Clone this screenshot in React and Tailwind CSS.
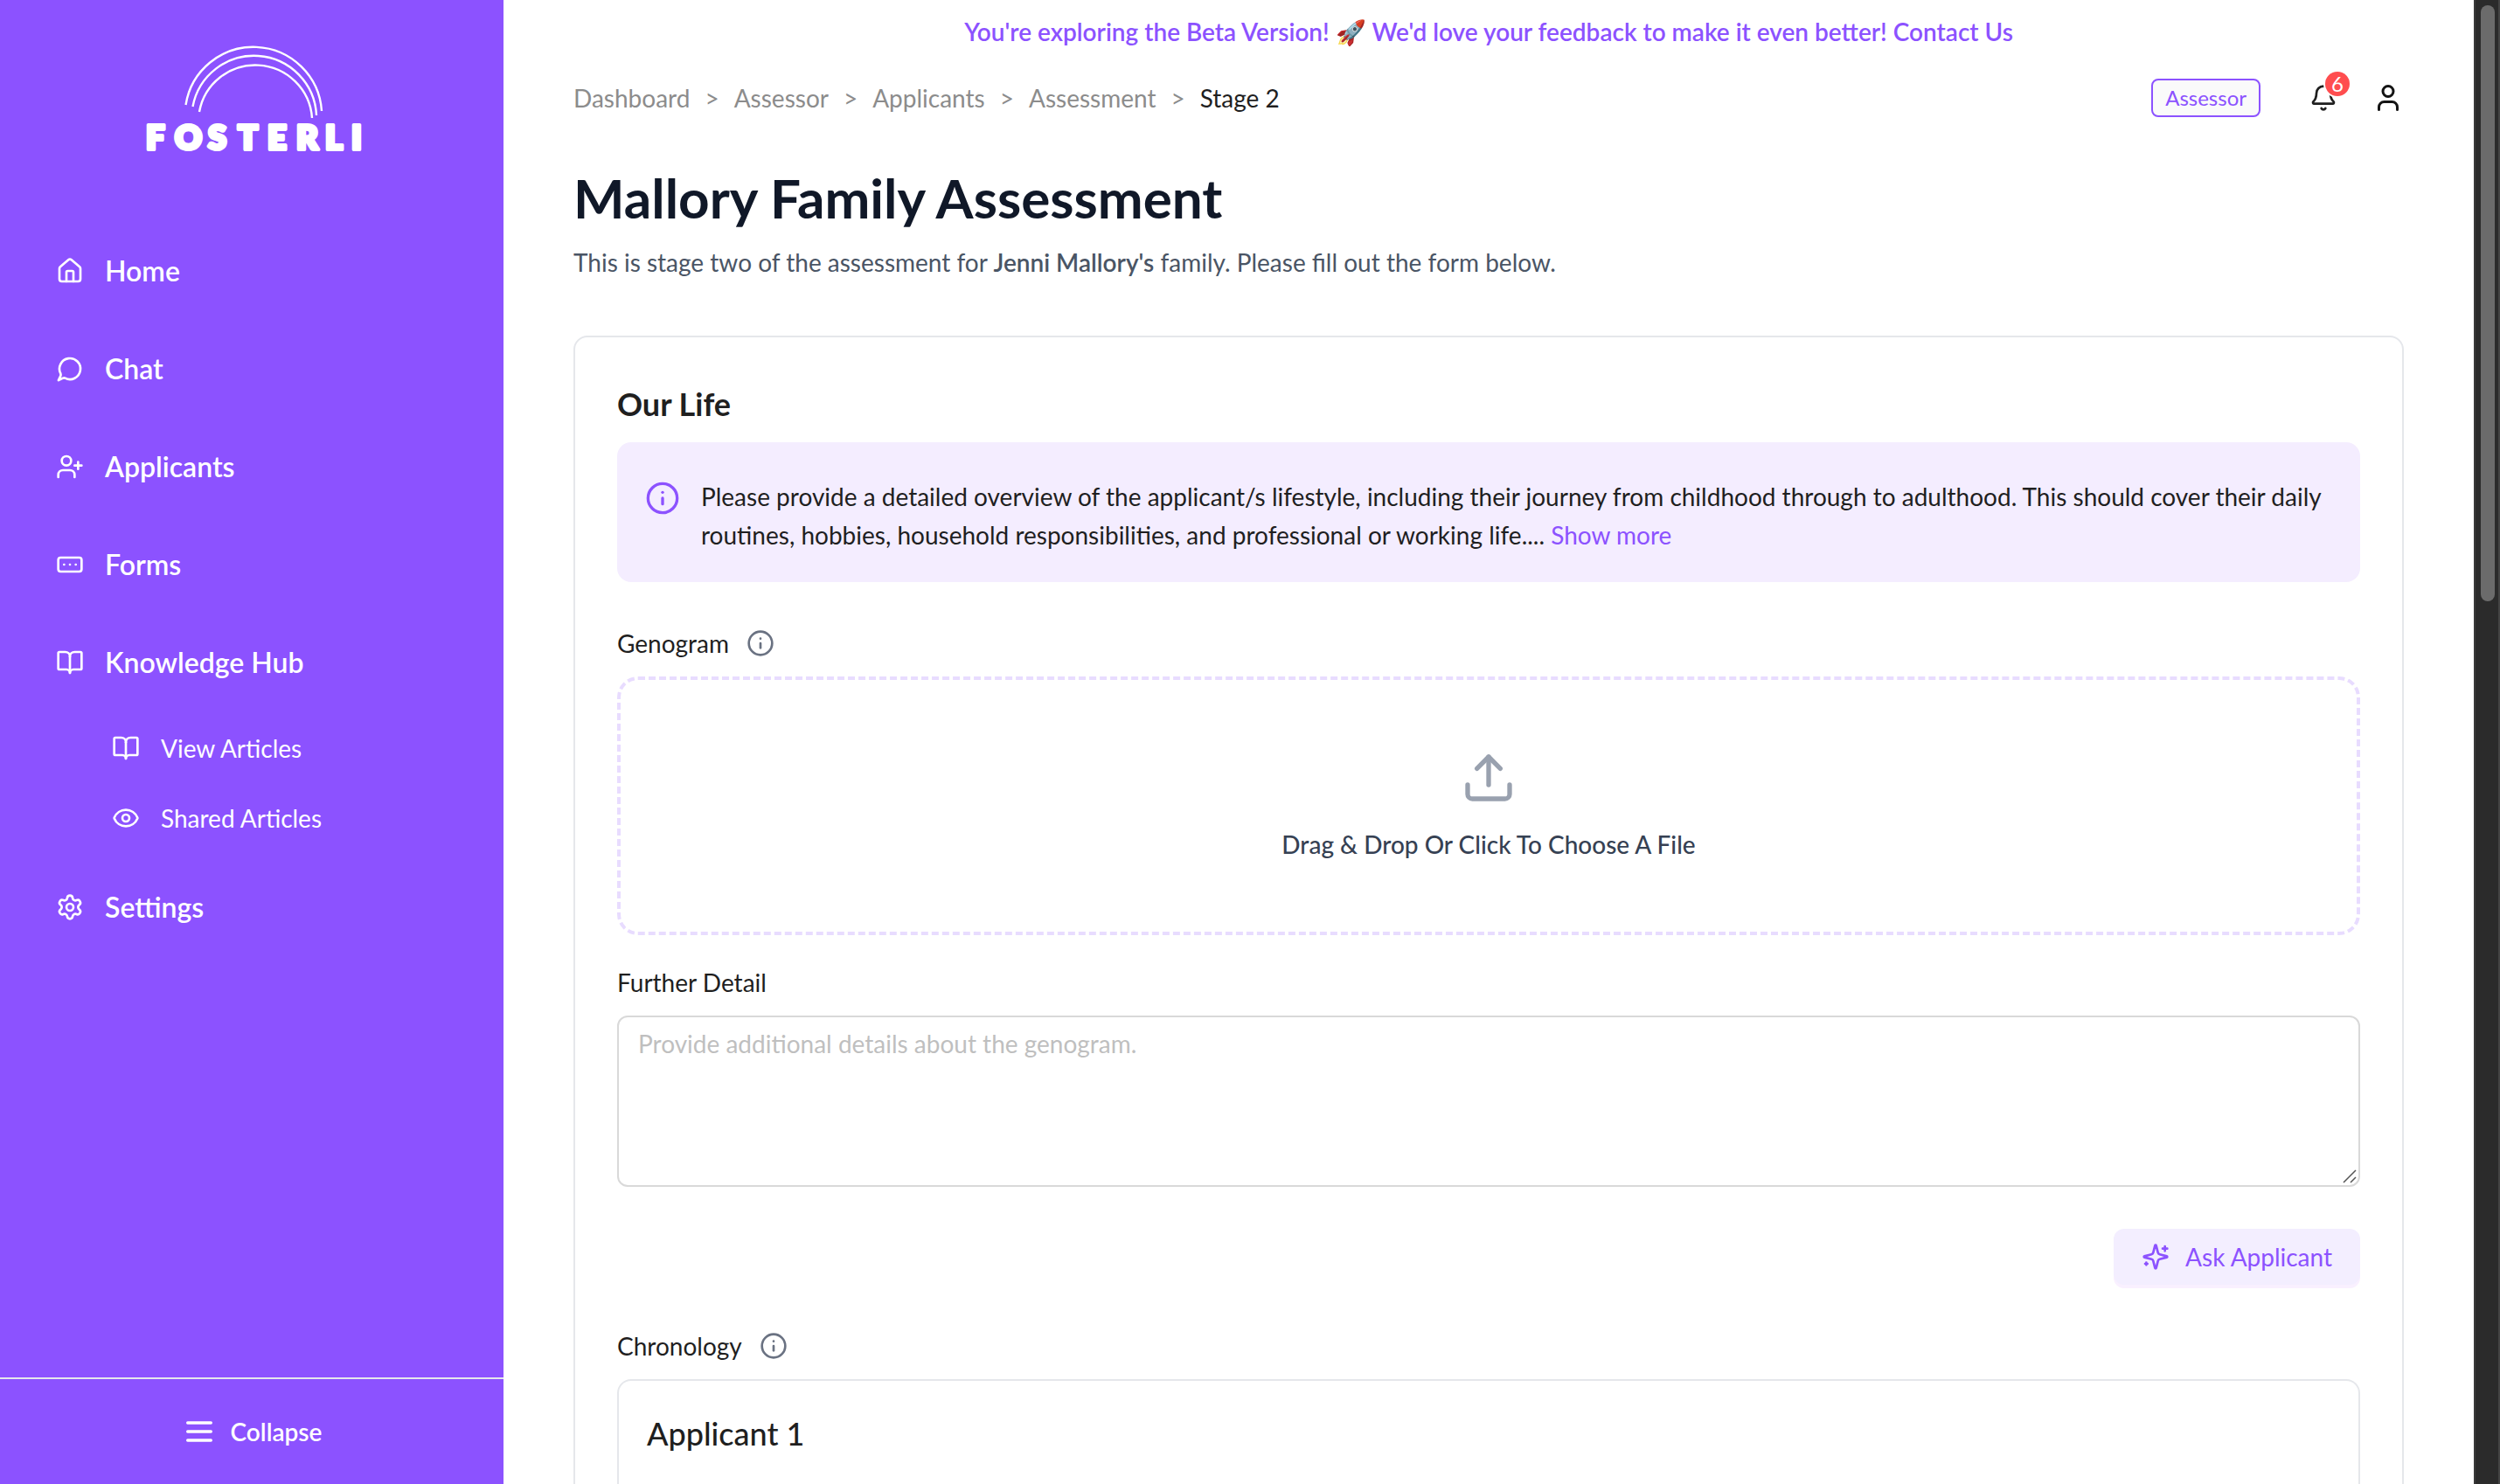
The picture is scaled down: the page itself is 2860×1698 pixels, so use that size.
import React from "react";
import {
  House,
  UserPlus,
  RectangleEllipsis,
  BookOpen,
  Eye,
  Settings,
  Bell,
  User,
  Info,
} from "lucide-react";

function Logo() {
  return (
    <svg
      viewBox="158 44 260 136"
      className="h-[136px] w-[260px] text-white"
      fill="none"
      stroke="currentColor"
      role="img"
      aria-label="Fosterli"
    >
      <g strokeWidth="2.4">
        <path d="M212.500 120A78.300 78.300 0 0 1 368 127" />
        <path d="M220.500 122A71.400 71.400 0 0 1 362 132" />
        <path d="M228 128A65.100 65.100 0 0 1 357 135" />
      </g>
      <text
        x="167 200 238 272 306 339 372 402"
        y="171"
        fill="currentColor"
        strokeWidth="4"
        strokeLinejoin="round"
        fontSize="38"
        fontWeight="800"
        fontFamily="Lato, sans-serif"
      >
        FOSTERLI
      </text>
    </svg>
  );
}

function ChatIcon({ className }) {
  return (
    <svg
      viewBox="0 0 24 24"
      className={className}
      fill="none"
      stroke="currentColor"
      strokeWidth="2"
      strokeLinecap="round"
      strokeLinejoin="round"
      aria-hidden="true"
    >
      <path d="M4 16.100A9 9 0 1 1 7.900 20C7.200 19.700 6.600 19.800 6 20L2.200 21.800L3.900 18.300C4.200 17.600 4.300 16.800 4 16.100Z" />
    </svg>
  );
}

function MenuIcon({ className }) {
  return (
    <svg
      viewBox="0 0 24 24"
      className={className}
      fill="none"
      stroke="currentColor"
      strokeWidth="2"
      strokeLinecap="round"
      aria-hidden="true"
    >
      <path d="M4 6h16M4 12h16M4 18h16" />
    </svg>
  );
}

function UploadIcon({ className }) {
  return (
    <svg
      viewBox="0 0 24 24"
      className={className}
      fill="none"
      stroke="currentColor"
      strokeWidth="2"
      strokeLinecap="round"
      strokeLinejoin="round"
      aria-hidden="true"
    >
      <path d="M21 15v4a2 2 0 0 1-2 2H5a2 2 0 0 1-2-2v-4" />
      <path d="M17 8l-5-5-5 5" />
      <path d="M12 3v12" />
    </svg>
  );
}

function SparklesIcon({ className }) {
  return (
    <svg
      viewBox="0 0 24 24"
      className={className}
      fill="none"
      stroke="currentColor"
      strokeWidth="2"
      strokeLinecap="round"
      strokeLinejoin="round"
      aria-hidden="true"
    >
      <path d="M9.937 15.500A2 2 0 0 0 8.500 14.063l-6.135-1.582a.5.5 0 0 1 0-.962L8.500 9.936A2 2 0 0 0 9.937 8.500l1.582-6.135a.5.5 0 0 1 .963 0L14.063 8.500A2 2 0 0 0 15.500 9.937l6.135 1.581a.5.5 0 0 1 0 .964L15.500 14.063a2 2 0 0 0-1.437 1.437l-1.582 6.135a.5.5 0 0 1-.963 0z" />
      <path d="M20 3v4M22 5h-4M4 17v2M5 18H3" />
    </svg>
  );
}

const mainNav = [
  { label: "Home", Icon: House },
  { label: "Chat", Icon: ChatIcon },
  { label: "Applicants", Icon: UserPlus },
  { label: "Forms", Icon: RectangleEllipsis },
  { label: "Knowledge Hub", Icon: BookOpen },
];

const hubNav = [
  { label: "View Articles", Icon: BookOpen },
  { label: "Shared Articles", Icon: Eye },
];

function NavLink({ label, Icon }) {
  return (
    <a href="#" className="flex h-28 items-center gap-6 px-16 text-[32px] leading-10 font-semibold">
      <Icon className="size-8 shrink-0" />
      <span>{label}</span>
    </a>
  );
}

function Sidebar() {
  return (
    <aside className="flex w-[576px] shrink-0 flex-col bg-[#8c52ff] text-white">
      <div className="flex justify-center pt-11">
        <Logo />
      </div>
      <nav className="mt-[74px] flex-1">
        {mainNav.map((item) => (
          <NavLink key={item.label} {...item} />
        ))}
        <div className="py-0.5">
          {hubNav.map(({ label, Icon }) => (
            <a key={label} href="#" className="flex h-20 items-center gap-6 pl-32 text-[28px] leading-10">
              <Icon className="size-8 shrink-0" />
              <span>{label}</span>
            </a>
          ))}
        </div>
        <div className="pt-1">
          <NavLink label="Settings" Icon={Settings} />
        </div>
      </nav>
      <button
        type="button"
        className="flex items-center justify-center gap-4 border-t-2 border-gray-200 py-10 text-[28px] leading-10 font-semibold"
      >
        <MenuIcon className="size-10" />
        Collapse
      </button>
    </aside>
  );
}

function Breadcrumb() {
  const trail = ["Dashboard", "Assessor", "Applicants", "Assessment"];
  return (
    <nav aria-label="Breadcrumb">
      <ol className="flex items-center gap-[17px] text-[28px] leading-11 text-[#8c8c8c]">
        {trail.map((name) => (
          <li key={name} className="flex gap-[17px]">
            <a href="#">{name}</a>
            <span aria-hidden="true">&gt;</span>
          </li>
        ))}
        <li aria-current="page" className="text-[#1f1f1f]">
          Stage 2
        </li>
      </ol>
    </nav>
  );
}

function Header() {
  return (
    <header className="mt-8 flex items-center justify-between">
      <Breadcrumb />
      <div className="flex items-center">
        <span className="flex h-11 items-center rounded-lg border-2 border-[#8c52ff] bg-[#fafafa] px-[14px] text-2xl text-[#8c52ff]">
          Assessor
        </span>
        <button type="button" aria-label="Notifications" className="relative ml-14 text-[#1f1f1f]">
          <Bell className="size-8" />
          <span className="absolute -top-3.5 left-[18px] flex size-7 items-center justify-center rounded-full bg-[#ff4d4f] text-2xl leading-none text-white ring-2 ring-white">
            6
          </span>
        </button>
        <button type="button" aria-label="Account" className="ml-10 text-[#141414]">
          <User className="size-9" />
        </button>
      </div>
    </header>
  );
}

function FieldLabel({ htmlFor, children, hint }) {
  return (
    <div className="flex items-center gap-5 text-[28px] leading-11 text-[#1f1f1f]">
      <label htmlFor={htmlFor}>{children}</label>
      {hint && (
        <button type="button" aria-label={hint} className="text-gray-500">
          <Info className="size-8" />
        </button>
      )}
    </div>
  );
}

function OurLife() {
  return (
    <section className="mt-[62px] rounded-2xl border-2 border-gray-200 px-12 pt-12 text-[#1f1f1f]">
      <h2 className="text-4xl leading-14 font-bold">Our Life</h2>

      <div className="mt-4 flex gap-6 rounded-2xl bg-[#f4edff] px-8 pt-10 pb-8 text-[28px] leading-11">
        <Info className="mt-1 size-10 shrink-0 text-[#8c52ff]" />
        <p>
          Please provide a detailed overview of the applicant/s lifestyle, including their journey from childhood
          through to adulthood. This should cover their daily
          <br />
          routines, hobbies, household responsibilities, and professional or working life....{" "}
          <a href="#" className="text-[#8c52ff]">
            Show more
          </a>
        </p>
      </div>

      <div className="mt-12">
        <FieldLabel htmlFor="genogram" hint="About the genogram">
          Genogram
        </FieldLabel>
        <label
          htmlFor="genogram"
          className="mt-4 flex cursor-pointer flex-col items-center gap-6 rounded-3xl border-4 border-dashed border-[#e8dcff] py-20"
        >
          <UploadIcon className="size-16 text-gray-400" />
          <span className="text-[28px] leading-10 font-medium text-gray-700">Drag &amp; Drop Or Click To Choose A File</span>
          <input id="genogram" type="file" className="sr-only" />
        </label>
      </div>

      <div className="mt-8">
        <FieldLabel htmlFor="detail">Further Detail</FieldLabel>
        <div className="relative mt-4">
          <textarea
            id="detail"
            placeholder="Provide additional details about the genogram."
            className="block h-[196px] w-full resize-none rounded-xl border-2 border-[#d9d9d9] px-[22px] py-2 text-[28px] leading-11 placeholder:text-[#bfbfbf]"
          />
          <svg
            viewBox="0 0 16 16"
            className="pointer-events-none absolute right-1 bottom-1 size-4"
            fill="none"
            stroke="#555"
            strokeWidth="1.500"
            aria-hidden="true"
          >
            <path d="M1 15L15 1M9 15L15 9" />
          </svg>
        </div>
      </div>

      <div className="mt-12 flex justify-end">
        <button
          type="button"
          className="flex h-16 items-center gap-[18px] rounded-xl bg-[#f3eeff] px-8 text-[28px] text-[#8c52ff] shadow-[0_4px_0_#f9f0ff]"
        >
          <SparklesIcon className="size-8" />
          Ask Applicant
        </button>
      </div>

      <div className="mt-12">
        <FieldLabel hint="About the chronology">Chronology</FieldLabel>
        <div className="mt-4 rounded-t-2xl border-2 border-b-0 border-gray-200 px-8 pt-8 pb-12">
          <h3 className="text-4xl leading-14 font-medium">Applicant 1</h3>
        </div>
      </div>
    </section>
  );
}

function Scrollbar() {
  return (
    <div
      aria-hidden="true"
      className="w-[30px] shrink-0 border-r-2 border-l-2 border-r-[#444] border-l-[#3a3a3a] bg-[#2b2b2b] px-1.5 pt-1.5"
    >
      <div className="h-[682px] w-4 rounded-full bg-[#6b6b6b]" />
    </div>
  );
}

export default function App() {
  return (
    <div className="flex h-screen overflow-hidden bg-white font-['Lato',sans-serif]">
      <Sidebar />
      <main className="min-w-0 flex-1 overflow-hidden px-20 pt-[14px]">
        <p className="text-center text-[28px] leading-11 font-semibold text-[#8c52ff]">
          You're exploring the Beta Version! 🚀 We'd love your feedback to make it even better!{" "}
          <a href="#">Contact Us</a>
        </p>
        <Header />
        <h1 className="mt-14 text-[62px] leading-[72px] font-bold text-gray-900">Mallory Family Assessment</h1>
        <p className="mt-4 text-[28px] leading-11 text-gray-600">
          This is stage two of the assessment for <strong className="font-semibold">Jenni Mallory's</strong> family.
          Please fill out the form below.
        </p>
        <OurLife />
      </main>
      <Scrollbar />
    </div>
  );
}
